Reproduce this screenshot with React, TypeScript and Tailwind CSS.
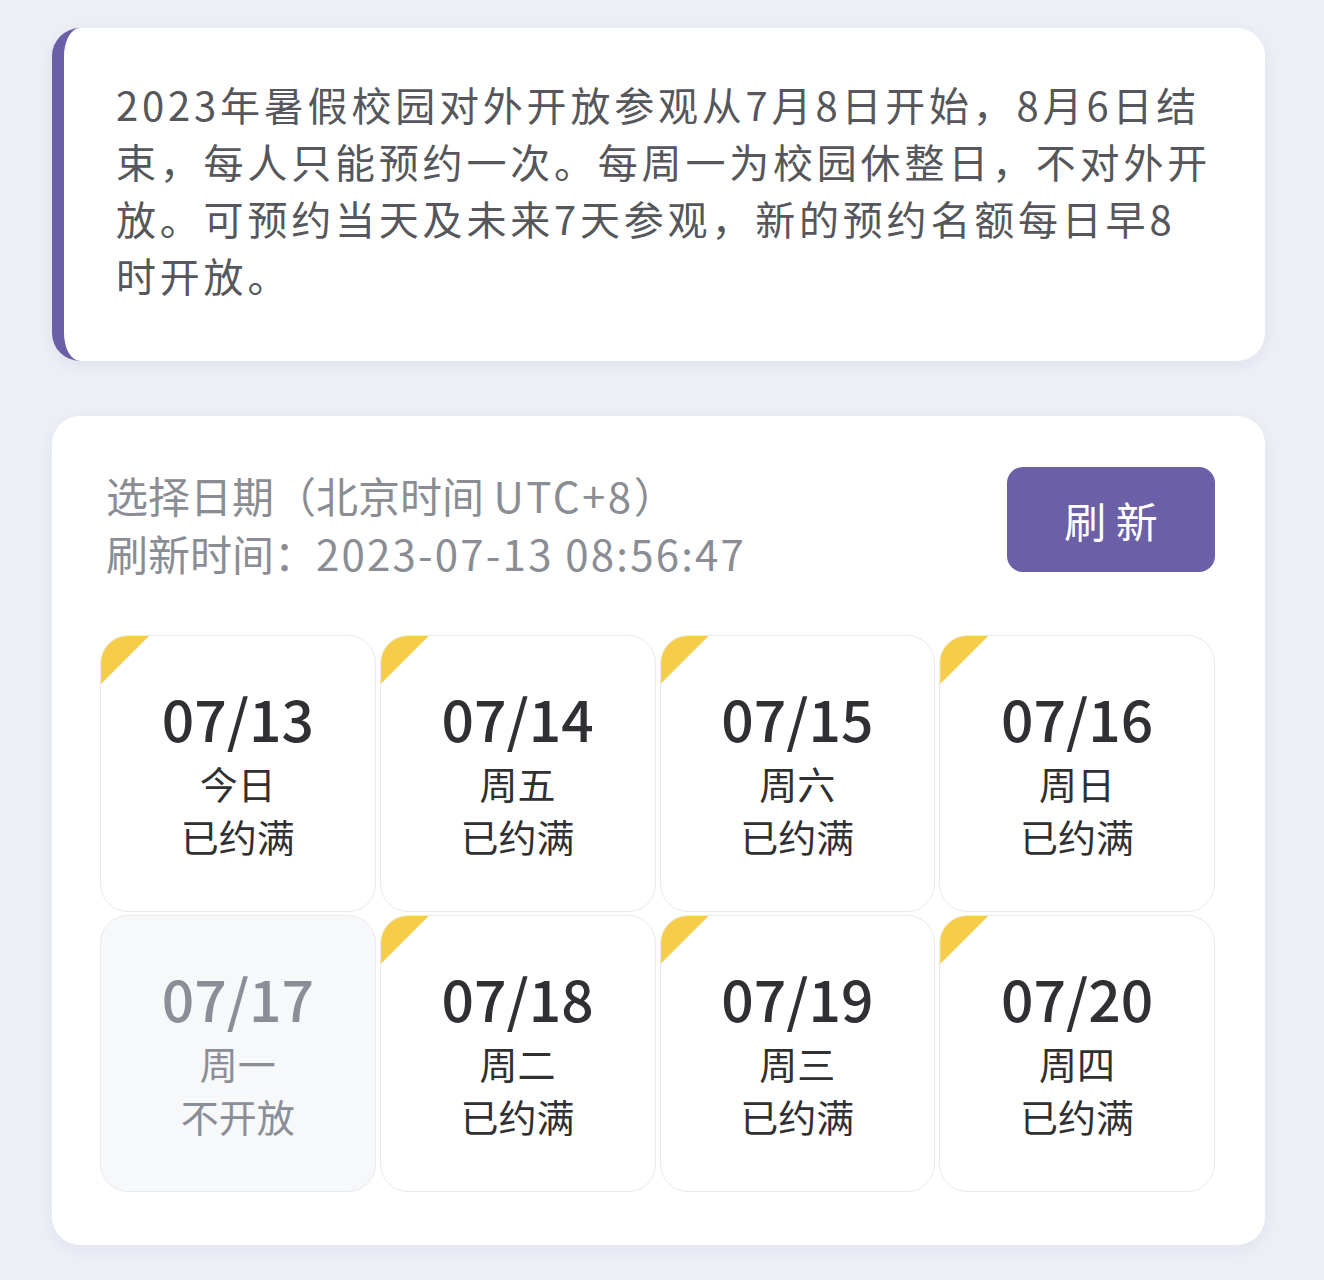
import React from 'react';

type Day = {
  date: string;
  week: string;
  status: string;
  closed?: boolean;
};

const days: Day[] = [
  { date: '07/13', week: '今日', status: '已约满' },
  { date: '07/14', week: '周五', status: '已约满' },
  { date: '07/15', week: '周六', status: '已约满' },
  { date: '07/16', week: '周日', status: '已约满' },
  { date: '07/17', week: '周一', status: '不开放', closed: true },
  { date: '07/18', week: '周二', status: '已约满' },
  { date: '07/19', week: '周三', status: '已约满' },
  { date: '07/20', week: '周四', status: '已约满' },
];

function DayCell({ day }: { day: Day }) {
  return (
    <div
      className={
        'relative h-[277px] overflow-hidden rounded-[28px] border-[1.5px] border-[#e7e9ef] flex flex-col items-center justify-center pb-[4px] ' +
        (day.closed ? 'bg-[#f7f8fa] text-[#8b8e96]' : 'bg-white text-[#2f3033]')
      }
    >
      {!day.closed && (
        <div className="absolute top-0 left-0 w-[48px] h-[48px] bg-[#f6cd48] [clip-path:polygon(0_0,100%_0,0_100%)]" />
      )}
      <div className="text-[57px] leading-[72px] font-medium">{day.date}</div>
      <div className="text-[38px] leading-[53px] mt-[3px]">{day.week}</div>
      <div className="text-[38px] leading-[53px]">{day.status}</div>
    </div>
  );
}

export default function App() {
  return (
    <div
      className="min-h-screen bg-[#eef0f7] pt-[28px] pl-[52px] pr-[59px] pb-[35px]"
      style={{ fontFamily: '"Noto Sans CJK SC", "Noto Sans", sans-serif' }}
    >
      <div className="bg-white rounded-[28px] border-l-[12px] border-[#6b5fa8] shadow-[0_4px_18px_rgba(110,120,160,0.12)] pl-[52px] pr-[20px] pt-[48px] pb-[57px]">
        <p className="text-[40px] leading-[57px] tracking-[3.8px] text-[#55575c]">
          2023年暑假校园对外开放参观从7月8日开始，8月6日结
          <br />
          束，每人只能预约一次。每周一为校园休整日，不对外开
          <br />
          放。可预约当天及未来7天参观，新的预约名额每日早8
          <br />
          时开放。
        </p>
      </div>

      <div className="mt-[55px] bg-white rounded-[28px] shadow-[0_4px_18px_rgba(110,120,160,0.12)] pt-[50px] pl-[54px] pr-[50px] pb-[53px]">
        <div className="flex items-start justify-between">
          <div className="text-[42px] leading-[58px] text-[#8a8d94]">
            <div>
              选择日期（北京时间 <span className="tracking-[2.5px]">UTC+8</span>）
            </div>
            <div>
              刷新时间：<span className="tracking-[2.2px]">2023-07-13 08:56:47</span>
            </div>
          </div>
          <button className="mt-[1px] w-[208px] h-[105px] rounded-[16px] bg-[#6b5fa8] text-white text-[42px] leading-none">
            刷 新
          </button>
        </div>

        <div className="mt-[53px] -ml-[6px] grid grid-cols-4 gap-x-[4px] gap-y-[3px]">
          {days.map((d) => (
            <DayCell key={d.date} day={d} />
          ))}
        </div>
      </div>
    </div>
  );
}
